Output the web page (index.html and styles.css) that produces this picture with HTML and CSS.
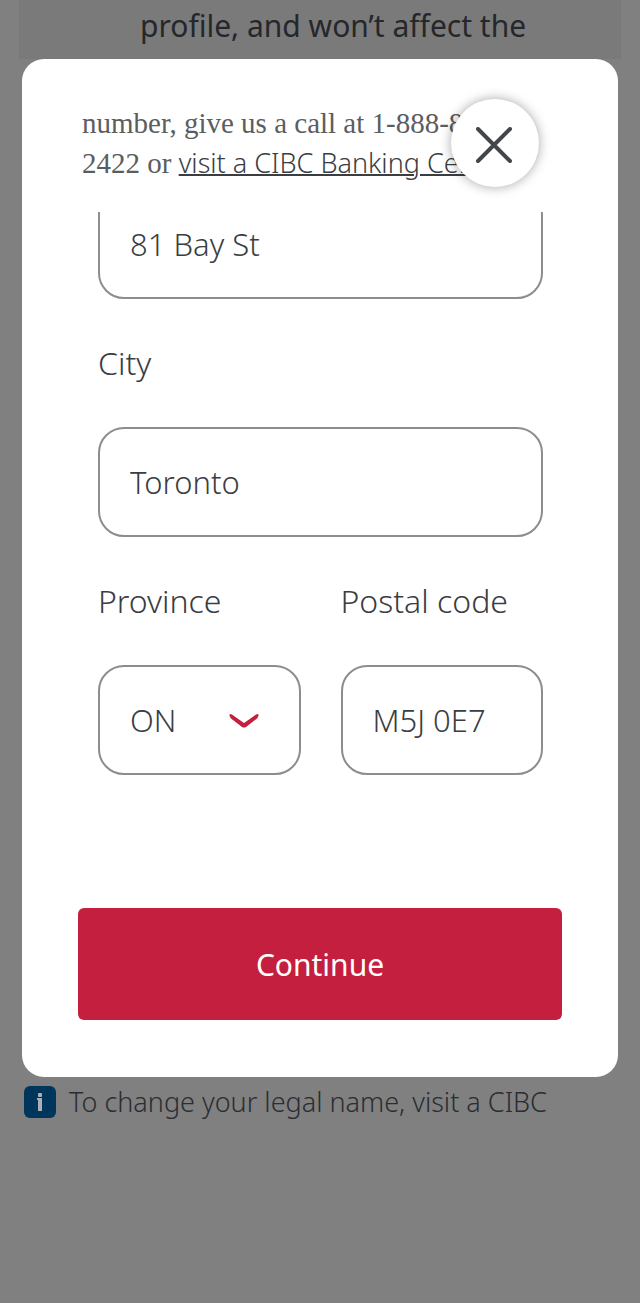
FILE: index.html
```html
<!DOCTYPE html>
<html lang="en">

<head>
    <meta charset="UTF-8">
    <meta name="viewport" content="width=device-width, initial-scale=1.0">
    <title>Change your address</title>
    <link rel="stylesheet" href="styles.css">
</head>

<body>
    <main class="page">
        <p class="notice">profile, and won’t affect the</p>

        <!-- address dialog -->
        <section class="dialog" role="dialog" aria-label="Change your address">
            <button class="close" type="button" aria-label="Close">
                <svg width="36" height="36" viewBox="0 0 36 36" fill="none" stroke="#43464b" stroke-width="4" stroke-linecap="round">
                    <path d="M2 2 34 34M34 2 2 34" />
                </svg>
            </button>
            <p class="help">number, give us a call at 1-888-872-<br>2422 or <a href="#">visit a CIBC Banking Centre</a></p>

            <form class="form">
                <div class="scroll">
                    <input class="field street" type="text" value="81 Bay St" aria-label="Street address">
                    <label class="label" for="city">City</label>
                    <input class="field" id="city" type="text" value="Toronto">
                    <div class="row">
                        <div class="col">
                            <label class="label" for="province">Province</label>
                            <div class="select">
                                <select class="field" id="province">
                                    <option>ON</option>
                                </select>
                                <svg class="arrow" width="30" height="16" viewBox="0 0 30 16" fill="#c41f3e">
                                    <path d="M1 1Q0 2 1 4Q2 6 4 7L13 14Q15 15 17 14L26 7Q28 6 29 4Q30 2 29 1Q27 1 25 3L15 10L5 3Q3 1 1 1Z" />
                                </svg>
                            </div>
                        </div>
                        <div class="col">
                            <label class="label" for="postal">Postal code</label>
                            <input class="field" id="postal" type="text" value="M5J 0E7">
                        </div>
                    </div>
                </div>
                <button class="continue" type="submit">Continue</button>
            </form>
        </section>

        <p class="info">
            <svg width="32" height="32" viewBox="0 0 32 32">
                <rect width="32" height="32" rx="6" fill="#00365c" />
                <rect x="14" y="7" width="4" height="4" rx="1" fill="#a9b0b6" />
                <path d="M13 12H18V25H14V14H13Z" fill="#a9b0b6" />
            </svg>
            <span>To change your legal name, visit a CIBC</span>
        </p>
    </main>
</body>

</html>
```

FILE: styles.css
```css
* {
    box-sizing: border-box;
}

body,
p {
    margin: 0;
}

body {
    min-height: 100vh;
    background: #808080;
    color: #3a3d42;
    font-family: "Noto Sans", sans-serif;
    font-weight: 300;
}

.page {
    padding: 0 22px;
}

.notice {
    height: 59px;
    margin: 0 -3px;
    padding: 6px 0 0 121px;
    background: #7a7a7a;
    color: #25272b;
    font-size: 30px;
    font-weight: 400;
    line-height: 40px;
}

.dialog {
    position: relative;
    padding: 44px 56px 57px;
    background: #fff;
    border-radius: 22px;
}

.close {
    position: absolute;
    top: 40px;
    right: 79px;
    display: flex;
    align-items: center;
    justify-content: center;
    width: 88px;
    height: 88px;
    padding: 4px 2px 0 0;
    border: 0;
    border-radius: 50%;
    background: #fff;
    box-shadow: 0 0 12px rgba(0, 0, 0, 0.35);
}

.help {
    padding-left: 4px;
    color: #5b5d61;
    font-family: "Liberation Serif", serif;
    font-size: 29px;
    line-height: 40px;
    white-space: nowrap;
}

.help a {
    color: #3a3d42;
    font-family: "Noto Sans", sans-serif;
    font-size: 27px;
    text-decoration-thickness: 2px;
}

.scroll {
    margin-top: 29px;
    padding: 0 19px 0 20px;
    overflow: hidden;
}

.field {
    display: block;
    width: 100%;
    height: 110px;
    padding: 0 30px;
    appearance: none;
    border: 2px solid #8b8d90;
    border-radius: 26px;
    background: #fff;
    color: inherit;
    font-family: inherit;
    font-size: 31px;
    font-weight: inherit;
}

.street {
    margin-top: -23px;
}

.label {
    display: block;
    padding: 44px 0;
    font-size: 32px;
    line-height: 40px;
}

.row {
    display: flex;
    gap: 40px;
}

.col {
    flex: 1;
    min-width: 0;
}

.select {
    position: relative;
}

.arrow {
    position: absolute;
    top: 48px;
    right: 42px;
    pointer-events: none;
}

.continue {
    display: block;
    width: 100%;
    height: 112px;
    margin-top: 133px;
    border: 0;
    border-radius: 6px;
    background: #c41f3e;
    color: #fff;
    font-family: inherit;
    font-size: 30px;
}

.info {
    display: flex;
    align-items: center;
    gap: 13px;
    padding: 5px 2px;
    color: #2b2d32;
    font-size: 27px;
    line-height: 40px;
    white-space: nowrap;
}
```
